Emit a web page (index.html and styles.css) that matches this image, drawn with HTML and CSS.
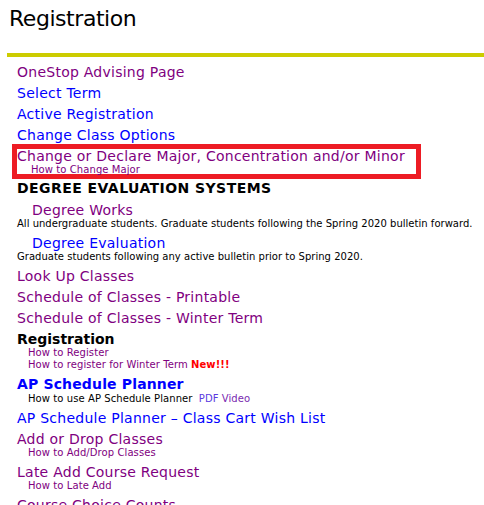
FILE: index.html
```html
<!DOCTYPE html>
<html lang="en">
<head>
<meta charset="utf-8">
<title>Registration</title>
<link rel="stylesheet" href="styles.css">
</head>
<body>
<div class="page">
  <header class="header">
    <h1 class="title">Registration</h1>
    <div class="rule"></div>
  </header>
  <ul class="menu">
    <li class="item"><a href="#" class="main visited">OneStop Advising Page</a></li>
    <li class="item"><a href="#" class="main fresh">Select Term</a></li>
    <li class="item"><a href="#" class="main fresh">Active Registration</a></li>
    <li class="item"><a href="#" class="main fresh">Change Class Options</a></li>
    <li class="item highlight">
      <a href="#" class="main tight visited">Change or Declare Major, Concentration and/or Minor</a>
      <a href="#" class="sub deep short visited">How to Change Major</a>
    </li>
    <li class="item"><span class="heading caps">DEGREE EVALUATION SYSTEMS</span></li>
    <li class="item shift">
      <a href="#" class="main indent visited">Degree Works</a>
      <span class="note">All undergraduate students. Graduate students following the Spring 2020 bulletin forward.</span>
    </li>
    <li class="item">
      <a href="#" class="main indent fresh">Degree Evaluation</a>
      <span class="note">Graduate students following any active bulletin prior to Spring 2020.</span>
    </li>
    <li class="item"><a href="#" class="main visited">Look Up Classes</a></li>
    <li class="item"><a href="#" class="main visited">Schedule of Classes - Printable</a></li>
    <li class="item"><a href="#" class="main visited">Schedule of Classes - Winter Term</a></li>
    <li class="item">
      <span class="heading">Registration</span>
      <a href="#" class="sub visited">How to Register</a>
      <span class="sub"><a href="#" class="visited">How to register for Winter Term</a> <span class="new">New!!!</span></span>
    </li>
    <li class="item">
      <a href="#" class="heading wide fresh">AP Schedule Planner</a>
      <span class="sub plain lower">How to use AP Schedule Planner <a href="#" class="pill fresh-soft">PDF</a> <a href="#" class="visited-soft">Video</a></span>
    </li>
    <li class="item"><a href="#" class="main fresh">AP Schedule Planner – Class Cart Wish List</a></li>
    <li class="item">
      <a href="#" class="main visited">Add or Drop Classes</a>
      <a href="#" class="sub visited">How to Add/Drop Classes</a>
    </li>
    <li class="item">
      <a href="#" class="main visited">Late Add Course Request</a>
      <a href="#" class="sub visited">How to Late Add</a>
    </li>
    <li class="item"><a href="#" class="main visited">Course Choice Counts</a></li>
  </ul>
</div>
</body>
</html>
```

FILE: styles.css
```css
html, body {
  margin: 0;
  padding: 0;
  background: #ffffff;
}

body {
  font-family: "DejaVu Sans", Verdana, sans-serif;
  color: #000000;
  overflow: hidden;
}

.page {
  padding-left: 7px;
}

.title {
  margin: 0;
  padding: 6px 0 0 2px;
  font-size: 22px;
  line-height: 26px;
  font-weight: normal;
  letter-spacing: -0.45px;
  color: #000000;
}

.rule {
  height: 4px;
  margin-top: 21px;
  background: #cccc00;
}

.menu {
  list-style: none;
  margin: 7px 0 0;
  padding: 0 0 0 10px;
  display: flex;
  flex-direction: column;
  gap: 5px;
}

.item {
  display: flex;
  flex-direction: column;
  align-items: flex-start;
}

.shift {
  margin-top: 1px;
}

a {
  text-decoration: none;
}

.main {
  display: block;
  font-size: 14px;
  line-height: 16px;
  letter-spacing: 0.25px;
}

.tight {
  line-height: 14px;
}

.heading {
  display: block;
  font-size: 14px;
  line-height: 16px;
  font-weight: bold;
  color: #000000;
}

.caps {
  letter-spacing: 0.44px;
}

.wide {
  letter-spacing: 0.15px;
}

.sub {
  display: block;
  font-size: 10px;
  line-height: 12px;
  padding-left: 11px;
  letter-spacing: 0.08px;
}

.short {
  line-height: 11px;
  padding-top: 1px;
  margin-bottom: -1px;
}

.deep {
  padding-left: 14px;
}

.lower {
  margin-top: 1px;
}

.indent {
  padding-left: 15px;
}

.note {
  display: block;
  font-size: 10px;
  line-height: 12px;
  color: #000000;
  letter-spacing: 0.02px;
}

.plain {
  color: #000000;
}

.pill {
  margin-left: 3px;
}

.visited {
  color: #800080;
}

.fresh {
  color: #0000ff;
}

.visited-soft {
  color: #7a2ab0;
}

.fresh-soft {
  color: #5a3ae0;
}

.new {
  color: #ff0000;
  font-weight: bold;
}

.highlight {
  width: 409px;
  box-sizing: border-box;
  border: 5px solid #ed1c24;
  margin: -4px 0 -4px -5px;
  padding: 0;
}
```
